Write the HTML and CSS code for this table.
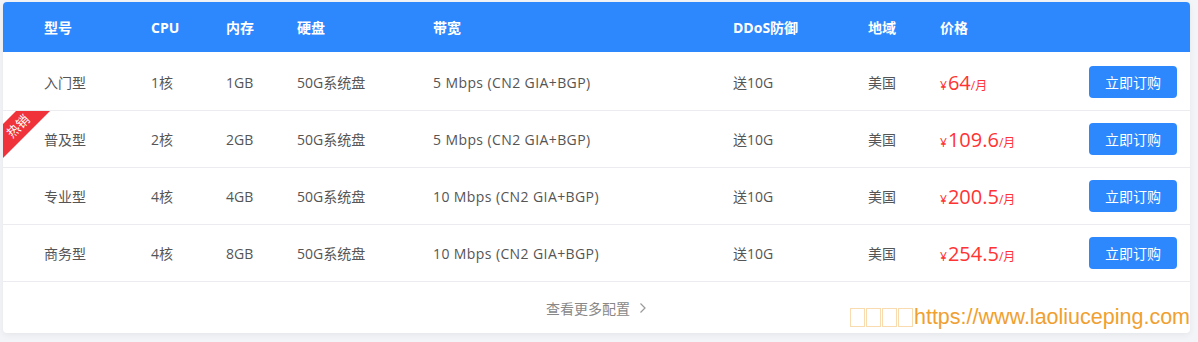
FILE: index.html
```html
<!DOCTYPE html>
<html lang="zh-CN">
<head>
<meta charset="utf-8">
<title>价格表</title>
<link rel="stylesheet" href="styles.css">
</head>
<body>
<div class="page">
  <div class="card">
    <div class="row head">
      <div>型号</div><div>CPU</div><div>内存</div><div>硬盘</div><div>带宽</div><div>DDoS防御</div><div>地域</div><div>价格</div><div></div>
    </div>
    <div class="rows">
      <div class="row item">
        <div>入门型</div><div>1核</div><div>1GB</div><div>50G系统盘</div><div class="bw">5 Mbps (CN2 GIA+BGP)</div><div>送10G</div><div>美国</div>
        <div class="price"><span class="yen">¥</span><span class="num">64</span><span class="unit">/月</span></div>
        <div><a class="buy">立即订购</a></div>
      </div>
      <div class="row item">
        <div class="ribbon"><span>热销</span></div>
        <div>普及型</div><div>2核</div><div>2GB</div><div>50G系统盘</div><div class="bw">5 Mbps (CN2 GIA+BGP)</div><div>送10G</div><div>美国</div>
        <div class="price"><span class="yen">¥</span><span class="num">109.6</span><span class="unit">/月</span></div>
        <div><a class="buy">立即订购</a></div>
      </div>
      <div class="row item">
        <div>专业型</div><div>4核</div><div>4GB</div><div>50G系统盘</div><div class="bw">10 Mbps (CN2 GIA+BGP)</div><div>送10G</div><div>美国</div>
        <div class="price"><span class="yen">¥</span><span class="num">200.5</span><span class="unit">/月</span></div>
        <div><a class="buy">立即订购</a></div>
      </div>
      <div class="row item">
        <div>商务型</div><div>4核</div><div>8GB</div><div>50G系统盘</div><div class="bw">10 Mbps (CN2 GIA+BGP)</div><div>送10G</div><div>美国</div>
        <div class="price"><span class="yen">¥</span><span class="num">254.5</span><span class="unit">/月</span></div>
        <div><a class="buy">立即订购</a></div>
      </div>
    </div>
    <div class="more">
      <span>查看更多配置</span>
      <svg class="chev" width="8" height="12" viewBox="0 0 8 12"><path d="M1.5 1.5 L6 6 L1.5 10.5" fill="none" stroke="#999" stroke-width="1.2"/></svg>
    </div>
  </div>
  <div class="watermark"><span class="tofu"></span><span class="tofu"></span><span class="tofu"></span><span class="tofu"></span>https://www.laoliuceping.com</div>
</div>
</body>
</html>
```
FILE: styles.css
```css
html, body {
  margin: 0;
  padding: 0;
  background: #f3f4f8;
}
body {
  font-family: "Open Sans", "Noto Sans CJK SC", sans-serif;
  font-size: 14px;
  color: #555;
}
.page {
  position: relative;
  width: 1198px;
  height: 342px;
  padding: 2px 0 0 3px;
  box-sizing: border-box;
}
.card {
  width: 1187px;
  background: #fff;
  border-radius: 4px;
  box-shadow: 0 2px 6px rgba(0, 0, 0, 0.06);
  overflow: hidden;
}
.row {
  display: grid;
  grid-template-columns: 107px 75px 71px 136px 300px 135px 72px 149px 88px;
  padding-left: 41px;
  align-items: center;
  position: relative;
}
.head {
  height: 50px;
  background: #2e88fd;
  color: #fff;
  font-weight: bold;
}
.rows {
  padding-top: 2px;
}
.item {
  height: 56px;
  border-bottom: 1px solid #ebebf0;
}
.bw {
  letter-spacing: 0.4px;
}
.price {
  color: #f33;
  display: flex;
  align-items: baseline;
}
.yen {
  font-size: 12px;
  margin-right: 1px;
}
.num {
  font-size: 20px;
}
.unit {
  font-size: 12px;
}
.buy {
  display: flex;
  align-items: center;
  justify-content: center;
  width: 88px;
  height: 32px;
  background: #2e88fd;
  color: #fff;
  border-radius: 4px;
  font-size: 14px;
}
.ribbon {
  position: absolute;
  left: 0;
  top: 0;
  width: 48px;
  height: 48px;
  overflow: hidden;
}
.ribbon span {
  position: absolute;
  left: -25px;
  top: 3px;
  width: 80px;
  height: 24px;
  line-height: 24px;
  background: #f0323a;
  color: #fff;
  font-size: 13px;
  text-align: center;
  transform: rotate(-45deg);
}
.more {
  height: 51px;
  display: flex;
  align-items: center;
  justify-content: center;
  gap: 9px;
  color: #888;
  font-size: 14px;
}
.chev {
  margin-top: 1px;
}
.watermark {
  position: absolute;
  right: 8px;
  bottom: 12px;
  color: #f0a030;
  font-family: "Liberation Sans", Arial, sans-serif;
  font-size: 21.5px;
  display: flex;
  align-items: center;
}
.tofu {
  display: inline-block;
  width: 13px;
  height: 17px;
  border: 1px solid #f8dcb0;
  margin-right: 1px;
}
```
